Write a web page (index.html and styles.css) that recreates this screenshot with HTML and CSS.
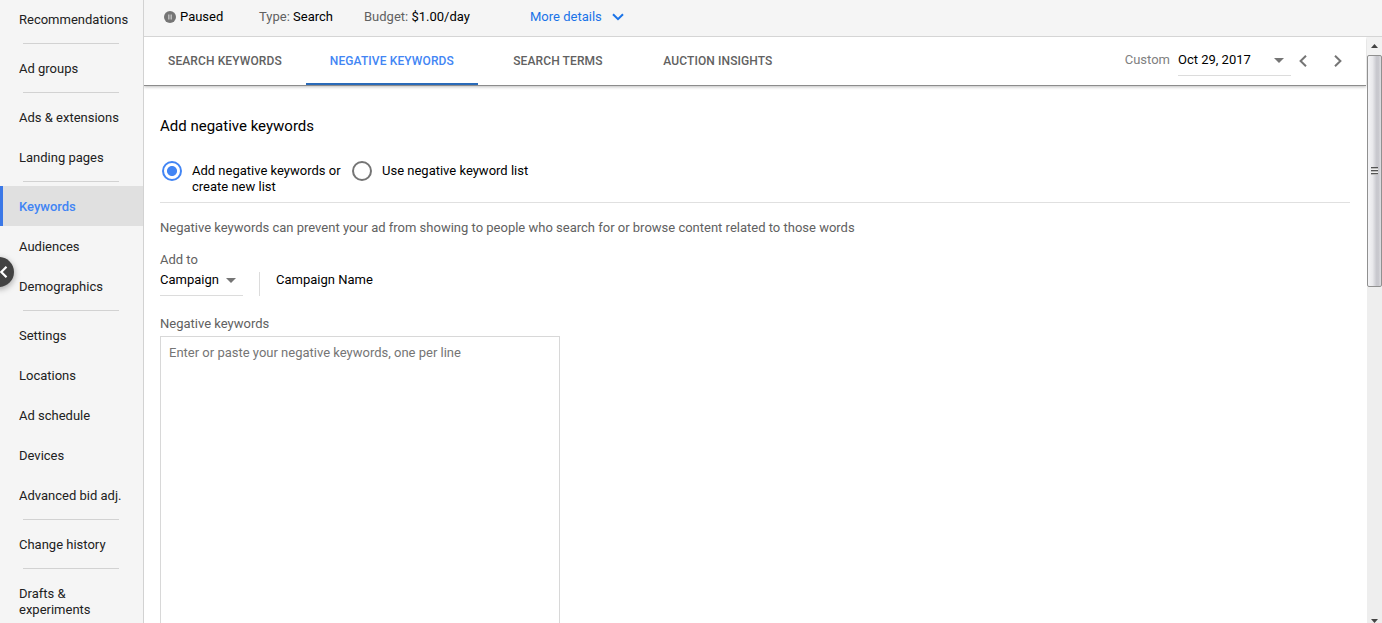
FILE: index.html
```html
<!DOCTYPE html>
<html lang="en">
<head>
<meta charset="utf-8">
<title>Negative keywords</title>
<link rel="stylesheet" href="styles.css">
</head>
<body>
<div class="app">
  <nav class="sidebar">
    <a class="item">Recommendations</a>
    <hr class="divider">
    <a class="item">Ad groups</a>
    <hr class="divider">
    <a class="item">Ads &amp; extensions</a>
    <a class="item">Landing pages</a>
    <hr class="divider">
    <a class="item active">Keywords</a>
    <a class="item">Audiences</a>
    <a class="item">Demographics</a>
    <hr class="divider">
    <a class="item">Settings</a>
    <a class="item">Locations</a>
    <a class="item">Ad schedule</a>
    <a class="item">Devices</a>
    <a class="item">Advanced bid adj.</a>
    <hr class="divider">
    <a class="item">Change history</a>
    <hr class="divider">
    <a class="item">Drafts &amp; experiments</a>
  </nav>
  <button class="collapse" aria-label="Collapse"><svg width="30" height="30" viewBox="0 0 30 30"><path d="M22.5 9.8L17.3 15l5.2 5.2" fill="none" stroke="#fff" stroke-width="2.2"/></svg></button>
  <div class="main">
    <header class="status-bar">
      <svg class="pause-icon" width="12" height="12" viewBox="0 0 12 12"><circle cx="6" cy="6" r="6" fill="#757575"/><path d="M4.8 3.5v5M7.2 3.5v5" stroke="#c4c4c4" stroke-width="1.4"/></svg>
      <span class="state">Paused</span>
      <span class="type"><span class="key">Type:</span> Search</span>
      <span class="budget"><span class="key">Budget:</span> $1.00/day</span>
      <a class="more">More details<svg width="12" height="8" viewBox="0 0 12 8"><path d="M1 1.2l5 5 5-5" fill="none" stroke="#1a73e8" stroke-width="2"/></svg></a>
    </header>
    <div class="body">
      <div class="page">
        <div class="tabs">
          <a class="tab">SEARCH KEYWORDS</a>
          <a class="tab selected">NEGATIVE KEYWORDS</a>
          <a class="tab">SEARCH TERMS</a>
          <a class="tab">AUCTION INSIGHTS</a>
          <div class="date">
            <span class="custom">Custom</span>
            <div class="date-select"><span>Oct 29, 2017</span><i class="caret"></i></div>
            <svg class="prev" width="8" height="12" viewBox="0 0 8 12"><path d="M7 .8L1.6 6 7 11.2" fill="none" stroke="#757575" stroke-width="2"/></svg>
            <svg class="next" width="8" height="12" viewBox="0 0 8 12"><path d="M1 .8L6.4 6 1 11.2" fill="none" stroke="#757575" stroke-width="2"/></svg>
          </div>
        </div>
        <section class="content">
          <h1 class="title">Add negative keywords</h1>
          <div class="options">
            <label class="option first"><i class="radio on"></i><span class="option-text">Add negative keywords or<br>create new list</span></label>
            <label class="option"><i class="radio"></i><span class="option-text">Use negative keyword list</span></label>
          </div>
          <p class="hint">Negative keywords can prevent your ad from showing to people who search for or browse content related to those words</p>
          <div class="label">Add to</div>
          <div class="target">
            <div class="level"><span>Campaign</span><i class="caret"></i></div>
            <div class="campaign">Campaign Name</div>
          </div>
          <div class="label">Negative keywords</div>
          <div class="textarea">Enter or paste your negative keywords, one per line</div>
        </section>
      </div>
      <div class="scrollbar">
        <div class="arrow"><svg width="7" height="4" viewBox="0 0 7 4"><path d="M3.5 0L7 4H0z" fill="#444"/></svg></div>
        <div class="thumb"><i class="grip"></i></div>
        <div class="arrow down"><svg width="7" height="4" viewBox="0 0 7 4"><path d="M0 0h7L3.5 4z" fill="#444"/></svg></div>
      </div>
    </div>
  </div>
</div>
</body>
</html>
```
FILE: styles.css
```css
* { box-sizing: border-box; }
body { margin: 0; font: 13px/16px Roboto, sans-serif; color: #000; background: #fff; overflow: hidden; }
.app { display: flex; height: 623px; position: relative; overflow: hidden; }
.sidebar { width: 144px; flex: none; margin-top: -1px; background: #f5f5f5; border-right: 1px solid #d2d2d2; color: #212121; overflow: hidden; }
.item { display: block; min-height: 40px; padding: 13px 12px 11px 19px; }
.item.active { background: #e0e0e0; color: #4285f4; font-weight: 500; border-left: 3px solid #3b78e7; padding-left: 16px; }
.divider { border: 0; height: 1px; margin: 4px 24px 4px 23px; background: #d2d2d2; }
.collapse { position: absolute; left: -16px; top: 257px; width: 30px; height: 30px; padding: 0; border: 0; border-radius: 50%; background: #424242; box-shadow: 0 2px 6px rgba(0,0,0,.35); }
.collapse svg { display: block; }
.main { flex: 1; min-width: 0; display: flex; flex-direction: column; }
.status-bar { height: 37px; flex: none; display: flex; align-items: center; padding: 0 0 3px 20px; background: #f5f5f5; border-bottom: 1px solid #d5d5d5; white-space: nowrap; }
.key { color: #616161; }
.state { width: 79px; margin-left: 4px; }
.type { width: 105px; }
.budget { width: 166px; }
.more { display: flex; align-items: center; gap: 10px; color: #1a73e8; }
.body { flex: 1; min-height: 0; display: flex; }
.page { flex: 1; min-width: 0; display: flex; flex-direction: column; overflow: hidden; }
.tabs { height: 49px; flex: none; margin-right: 1px; display: flex; border-bottom: 1px solid #8c8c8c; box-shadow: 0 1px 3px rgba(0,0,0,.25); }
.tab { height: 48px; min-width: 160px; padding: 16px 24px; text-align: center; font-size: 12px; font-weight: 500; letter-spacing: 0.11px; color: #616161; white-space: nowrap; }
.tab.selected { color: #4285f4; border-bottom: 2px solid #2a6ab8; }
.date { margin-left: auto; display: flex; align-items: flex-start; }
.custom { padding-top: 15px; margin-right: 8px; color: #808080; }
.date-select { width: 113px; height: 39px; padding: 15px 7px 0 0; display: flex; justify-content: space-between; border-bottom: 1px solid #dcdcdc; }
.caret { width: 0; height: 0; margin-top: 6px; border: 5px solid transparent; border-top-color: #757575; border-bottom: 0; }
.prev { margin: 18px 0 0 8px; }
.next { margin: 18px 24px 0 27px; }
.content { padding: 30px 17px 0 16px; flex: 1; min-height: 0; display: flex; flex-direction: column; }
.title { margin: 0; font-size: 15px; line-height: 20px; font-weight: 400; }
.options { flex: none; display: flex; height: 67px; padding-top: 25px; border-bottom: 1px solid #e0e0e0; }
.option { display: flex; margin-left: 2px; }
.option-text { padding-top: 2px; }
.option.first { width: 188px; white-space: nowrap; }
.radio { width: 20px; height: 20px; margin-right: 10px; flex: none; border: 2px solid #757575; border-radius: 50%; }
.radio.on { border-color: #4285f4; background: radial-gradient(circle, #4285f4 4.6px, transparent 5.4px); }
.hint { margin: 17px 0 16px; color: #616161; }
.label { color: #616161; }
.target { flex: none; display: flex; height: 48px; }
.level { width: 83px; height: 28px; padding: 4px 7px 0 0; display: flex; justify-content: space-between; border-bottom: 1px solid #dcdcdc; }
.campaign { height: 24px; margin: 4px 0 0 16px; padding-left: 16px; border-left: 1px solid #dcdcdc; }
.textarea { width: 400px; margin-top: 4px; flex: 1; border: 1px solid #d8d8d8; border-bottom: 0; padding: 8px; color: #757575; }
.scrollbar { width: 15px; flex: none; display: flex; flex-direction: column; background: #eee; }
.arrow { height: 18px; flex: none; display: flex; justify-content: center; align-items: center; background: #f2f2f2; }
.arrow.down { margin-top: auto; height: 6px; align-items: flex-end; background: none; }
.thumb { height: 232px; display: flex; justify-content: center; align-items: center; border: 1px solid #909090; border-radius: 2px; background: linear-gradient(90deg, #f4f4f6, #e9e9ec 35%, #c8c8ce 65%, #c8c8ce 80%, #dedee2); }
.grip { width: 7px; height: 8px; background: repeating-linear-gradient(#555 0 1px, #bbb 1px 2px, #eee 2px 3px); }
```
